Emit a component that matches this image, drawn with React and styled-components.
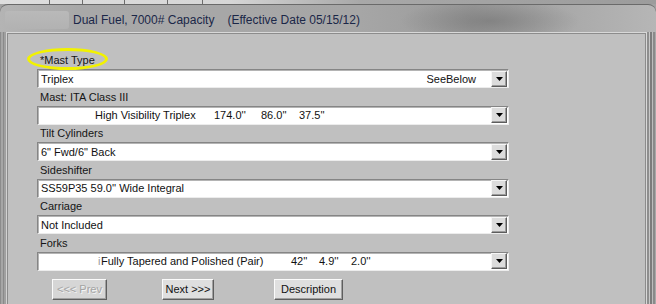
import React from "react";
import styled, { createGlobalStyle } from "styled-components";

const Global = createGlobalStyle`
  html, body { margin: 0; padding: 0; background: #a6a6a6; }
  body { font-family: "Liberation Sans", Arial, sans-serif; }
  * { box-sizing: border-box; }
`;

const Page = styled.div`
  width: 656px;
  height: 304px;
  overflow: hidden;
  display: flex;
  flex-direction: column;
  background: #a2a2a2;
`;

const TopStrip = styled.div`
  height: 4px;
  display: flex;
  background: linear-gradient(90deg, #dedede 0%, #d6d6d6 35%, #a8a8a8 55%, #9c9c9c 100%);
  flex-shrink: 0;
`;

const StripCell = styled.div`
  width: ${(p) => p.$w}px;
  height: 100%;
  border-right: 1px solid #6c6c6c;
  flex-shrink: 0;
`;

const Window = styled.div`
  flex: 1;
  display: flex;
  flex-direction: column;
  border-radius: 8px 8px 0 0;
  border-top: 1px solid #6a6a6a;
  overflow: hidden;
  background:
    radial-gradient(ellipse 90px 22px at 490px 16px, rgba(110,110,110,0.55), rgba(110,110,110,0) 100%),
    linear-gradient(90deg, #b4b4b4 0%, #a8a8a8 12%, #a6a6a6 55%, #9a9a9a 72%, #a8a8a8 85%, #b6b6b6 100%);
`;

const TitleBar = styled.div`
  height: 27px;
  display: flex;
  align-items: center;
  padding: 2px 0 0 5px;
  flex-shrink: 0;
`;

const GlassTab = styled.div`
  width: 64px;
  height: 18px;
  margin-right: 4px;
  border-radius: 3px;
  background: linear-gradient(180deg, #b9b9b9, #b2b2b2);
`;

const TitleText = styled.div`
  display: flex;
  gap: 13px;
  font-family: "Liberation Sans", Arial, sans-serif;
  font-size: 12px;
  color: #1b2748;
  white-space: nowrap;
`;

const WindowBody = styled.div`
  flex: 1;
  display: flex;
`;

const SideEdge = styled.div`
  width: ${(p) => p.$w}px;
  flex-shrink: 0;
  background: ${(p) =>
    p.$right
      ? "linear-gradient(90deg, #8e8e8e 0px, #8e8e8e 2px, #c8c8c8 2px, #c8c8c8 3px, #7c7c7c 3px, #7c7c7c 5px, #bdbdbd 5px, #bdbdbd 6px, #8a8a8a 6px, #8a8a8a 8px, #a8a8a8 8px)"
      : "linear-gradient(90deg, #8c8c8c 0px, #8c8c8c 1px, #a6a6a6 1px, #a6a6a6 3px, #8a8a8a 3px, #8a8a8a 4px, #a0a0a0 4px)"};
`;

const Client = styled.div`
  flex: 1;
  background: #c0c0c0;
  border-top: 1px solid #d8d8d8;
  border-left: 1px solid #d2d2d2;
  border-right: 1px solid #d8d8d8;
  box-shadow: inset 0 1px 0 #8c8c8c, inset 1px 0 0 #8c8c8c, inset -1px 0 0 #8c8c8c;
`;

const Form = styled.div`
  padding: 19px 0 0 30px;
  display: flex;
  flex-direction: column;
  gap: 0.6px;
`;

const Field = styled.div`
  position: relative;
  display: flex;
  flex-direction: column;
`;

const Label = styled.div`
  height: 17px;
  line-height: 17px;
  padding-left: 3px;
  font-size: 11px;
  color: #151515;
  white-space: nowrap;
`;

const Highlight = styled.div`
  position: absolute;
  left: -10px;
  top: -4px;
  width: 81px;
  height: 22px;
  border: 3px solid #f2f200;
  border-radius: 50%;
  pointer-events: none;
`;

const Combo = styled.div`
  width: 472px;
  height: 19px;
  display: flex;
  align-items: center;
  background: #ffffff;
  border-top: 1px solid #858585;
  border-left: 1px solid #858585;
  border-bottom: 1px solid #ececec;
  border-right: 1px solid #ececec;
  box-shadow: inset 1px 1px 0 #b4b4b4;
  padding-left: 3px;
  font-size: 11px;
  color: #111;
  white-space: nowrap;
`;

const ComboValue = styled.div`
  flex: 1;
  display: flex;
  align-items: center;
  overflow: hidden;
`;

const Cell = styled.span`
  display: inline-block;
  width: ${(p) => (p.$w ? `${p.$w}px` : "auto")};
  flex-shrink: 0;
  color: ${(p) => (p.$faint ? "#9a9a9a" : "inherit")};
`;

const Extra = styled.span`
  margin-right: 15px;
`;

const DropButton = styled.div`
  width: 16px;
  height: 16px;
  margin-right: 1px;
  display: flex;
  align-items: center;
  justify-content: center;
  background: #dcdcdc;
  border-top: 1px solid #f6f6f6;
  border-left: 1px solid #f6f6f6;
  border-bottom: 1px solid #5c5c5c;
  border-right: 1px solid #5c5c5c;
  box-shadow: inset -1px -1px 0 #9c9c9c;
  flex-shrink: 0;
`;

const ButtonRow = styled.div`
  display: flex;
  margin-top: 7px;
  padding-left: 15px;
`;

const Btn = styled.button`
  width: ${(p) => p.$w}px;
  height: 21px;
  margin-left: ${(p) => p.$ml || 0}px;
  padding: 0;
  font-family: "Liberation Sans", Arial, sans-serif;
  font-size: 11px;
  color: #111;
  background: #dfdfdf;
  border: 1px solid;
  border-color: #fbfbfb #5e5e5e #5e5e5e #fbfbfb;
  box-shadow: inset -1px -1px 0 #a0a0a0;
  white-space: nowrap;
  &:disabled {
    color: #a4a4a4;
    text-shadow: 1px 1px 0 #f4f4f4;
    background: #d6d6d6;
  }
`;

const Arrow = () => (
  <svg width="7" height="4" viewBox="0 0 7 4">
    <polygon points="0,0 7,0 3.5,4" fill="#000" />
  </svg>
);

const ComboBox = ({ children, extra }) => (
  <Combo>
    <ComboValue>{children}</ComboValue>
    {extra && <Extra>{extra}</Extra>}
    <DropButton>
      <Arrow />
    </DropButton>
  </Combo>
);

export default function App() {
  return (
    <>
      <Global />
      <Page>
        <TopStrip>
          <StripCell $w={50} />
          <StripCell $w={33} />
          <StripCell $w={42} />
          <StripCell $w={43} />
          <StripCell $w={35} />
        </TopStrip>
        <Window>
          <TitleBar>
            <GlassTab />
            <TitleText>
              <span>Dual Fuel, 7000# Capacity</span>
              <span>(Effective Date 05/15/12)</span>
            </TitleText>
          </TitleBar>
          <WindowBody>
            <SideEdge $w={6} />
            <Client>
              <Form>
                <Field>
                  <Highlight />
                  <Label>*Mast Type</Label>
                  <ComboBox extra="SeeBelow">
                    <Cell>Triplex</Cell>
                  </ComboBox>
                </Field>
                <Field>
                  <Label>Mast: ITA Class III</Label>
                  <ComboBox>
                    <Cell $w={54} />
                    <Cell $w={119}>High Visibility Triplex</Cell>
                    <Cell $w={47}>174.0''</Cell>
                    <Cell $w={38}>86.0''</Cell>
                    <Cell>37.5''</Cell>
                  </ComboBox>
                </Field>
                <Field>
                  <Label>Tilt Cylinders</Label>
                  <ComboBox>
                    <Cell>6" Fwd/6" Back</Cell>
                  </ComboBox>
                </Field>
                <Field>
                  <Label>Sideshifter</Label>
                  <ComboBox>
                    <Cell>SS59P35 59.0'' Wide Integral</Cell>
                  </ComboBox>
                </Field>
                <Field>
                  <Label>Carriage</Label>
                  <ComboBox>
                    <Cell>Not Included</Cell>
                  </ComboBox>
                </Field>
                <Field>
                  <Label>Forks</Label>
                  <ComboBox>
                    <Cell $w={57} />
                    <Cell $w={3} $faint>i</Cell>
                    <Cell $w={190}>Fully Tapered and Polished (Pair)</Cell>
                    <Cell $w={28}>42''</Cell>
                    <Cell $w={32}>4.9''</Cell>
                    <Cell>2.0''</Cell>
                  </ComboBox>
                </Field>
                <ButtonRow>
                  <Btn $w={55} disabled>
                    {"<<< Prev"}
                  </Btn>
                  <Btn $w={52} $ml={55}>
                    {"Next >>>"}
                  </Btn>
                  <Btn $w={69} $ml={60}>
                    Description
                  </Btn>
                </ButtonRow>
              </Form>
            </Client>
            <SideEdge $w={9} $right />
          </WindowBody>
        </Window>
      </Page>
    </>
  );
}
